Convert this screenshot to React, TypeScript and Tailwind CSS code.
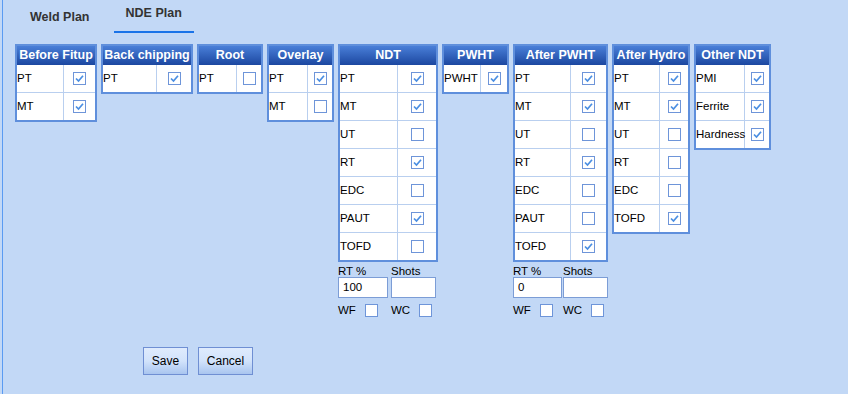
type Row = { label: string; checked: boolean };

interface PlanTableProps {
  title: string;
  width: number;
  labelWidth: number;
  rows: Row[];
}

function Check({ checked }: { checked: boolean }) {
  return (
    <span className="w-[13px] h-[13px] bg-white border border-[#6e95d9] flex items-center justify-center">
      {checked && (
        <svg width="11" height="11" viewBox="0 0 11 11">
          <path d="M2 5.5 L4.5 8 L9 2.8" fill="none" stroke="#4a8ee2" strokeWidth="1.7" />
        </svg>
      )}
    </span>
  );
}

function PlanTable({ title, width, labelWidth, rows }: PlanTableProps) {
  return (
    <div className="border-2 border-[#5f8fdc] bg-white" style={{ width }}>
      <div className="h-[19px] leading-[19px] bg-linear-to-b from-[#4a7fd8] to-[#1c47a0] text-white font-bold text-[12.5px] text-center whitespace-nowrap overflow-hidden">
        {title}
      </div>
      {rows.map((r, i) => (
        <div key={r.label} className={`flex ${i > 0 ? "h-[28px] border-t border-[#b9cfef]" : "h-[27px]"}`}>
          <div
            className="flex items-center text-[11.5px] text-black border-r border-[#b9cfef] whitespace-nowrap"
            style={{ width: labelWidth }}
          >
            {r.label}
          </div>
          <div className="flex-1 flex items-center justify-center">
            <Check checked={r.checked} />
          </div>
        </div>
      ))}
    </div>
  );
}

function RtExtras({ rt, w1, w2, gap }: { rt: string; w1: number; w2: number; gap: number }) {
  return (
    <div className="text-[11.5px] text-black">
      <div className="flex h-[15px] items-end leading-none" style={{ gap }}>
        <span style={{ width: w1 }}>RT %</span>
        <span style={{ width: w2 }}>Shots</span>
      </div>
      <div className="flex" style={{ gap }}>
        <div className="h-[21px] bg-white border border-[#7c9dd6] pl-[4px] flex items-center" style={{ width: w1 }}>
          {rt}
        </div>
        <div className="h-[21px] bg-white border border-[#7c9dd6]" style={{ width: w2 }} />
      </div>
      <div className="flex mt-[4px]" style={{ gap }}>
        <div className="flex items-center gap-[9px]" style={{ width: w1 }}>
          <span>WF</span>
          <Check checked={false} />
        </div>
        <div className="flex items-center gap-[9px]" style={{ width: w2 }}>
          <span>WC</span>
          <Check checked={false} />
        </div>
      </div>
    </div>
  );
}

const r = (label: string, checked: boolean) => ({ label, checked });

export default function App() {
  return (
    <div className="w-[848px] min-h-[394px] bg-[#c2d8f6] font-['Liberation_Sans',Arial,sans-serif] pl-[2px]">
      <div className="min-h-[394px] border-l border-[#5a9bf2]">
        <div className="flex items-start h-[33px] pl-[15px] gap-[12px] text-[12.5px] font-bold text-[#333]">
          <div className="px-3 pt-[8px]">Weld Plan</div>
          <div className="px-3 pt-[4px] h-[33px] border-b-2 border-[#1a73e8]">NDE Plan</div>
        </div>

        <div className="flex items-start gap-[4px] mt-[11px] pl-[12px]">
          <PlanTable title="Before Fitup" width={82} labelWidth={47} rows={[r("PT", true), r("MT", true)]} />
          <PlanTable title="Back chipping" width={92} labelWidth={54} rows={[r("PT", true)]} />
          <PlanTable title="Root" width={66} labelWidth={38} rows={[r("PT", false)]} />
          <PlanTable title="Overlay" width={67} labelWidth={39} rows={[r("PT", true), r("MT", false)]} />
          <div className="flex flex-col">
            <PlanTable
              title="NDT"
              width={100}
              labelWidth={58}
              rows={[
                r("PT", true),
                r("MT", true),
                r("UT", false),
                r("RT", true),
                r("EDC", false),
                r("PAUT", true),
                r("TOFD", false),
              ]}
            />
            <RtExtras rt="100" w1={50} w2={45} gap={3} />
          </div>
          <PlanTable title="PWHT" width={67} labelWidth={37} rows={[r("PWHT", true)]} />
          <div className="flex flex-col">
            <PlanTable
              title="After PWHT"
              width={95}
              labelWidth={56}
              rows={[
                r("PT", true),
                r("MT", true),
                r("UT", false),
                r("RT", true),
                r("EDC", false),
                r("PAUT", false),
                r("TOFD", true),
              ]}
            />
            <RtExtras rt="0" w1={49} w2={45} gap={1} />
          </div>
          <PlanTable
            title="After Hydro"
            width={78}
            labelWidth={46}
            rows={[r("PT", true), r("MT", true), r("UT", false), r("RT", false), r("EDC", false), r("TOFD", true)]}
          />
          <PlanTable
            title="Other NDT"
            width={77}
            labelWidth={49}
            rows={[r("PMI", true), r("Ferrite", true), r("Hardness", true)]}
          />
        </div>

        <div className="flex gap-[10px] pl-[140px] mt-[28px]">
          <button className="w-[45px] h-[28px] border border-[#6f8fd3] bg-linear-to-b from-[#dfebfd] via-[#d2e3fb] to-[#a9c5ef] text-[12px] text-black">
            Save
          </button>
          <button className="w-[55px] h-[28px] border border-[#6f8fd3] bg-linear-to-b from-[#dfebfd] via-[#d2e3fb] to-[#a9c5ef] text-[12px] text-black">
            Cancel
          </button>
        </div>
      </div>
    </div>
  );
}
